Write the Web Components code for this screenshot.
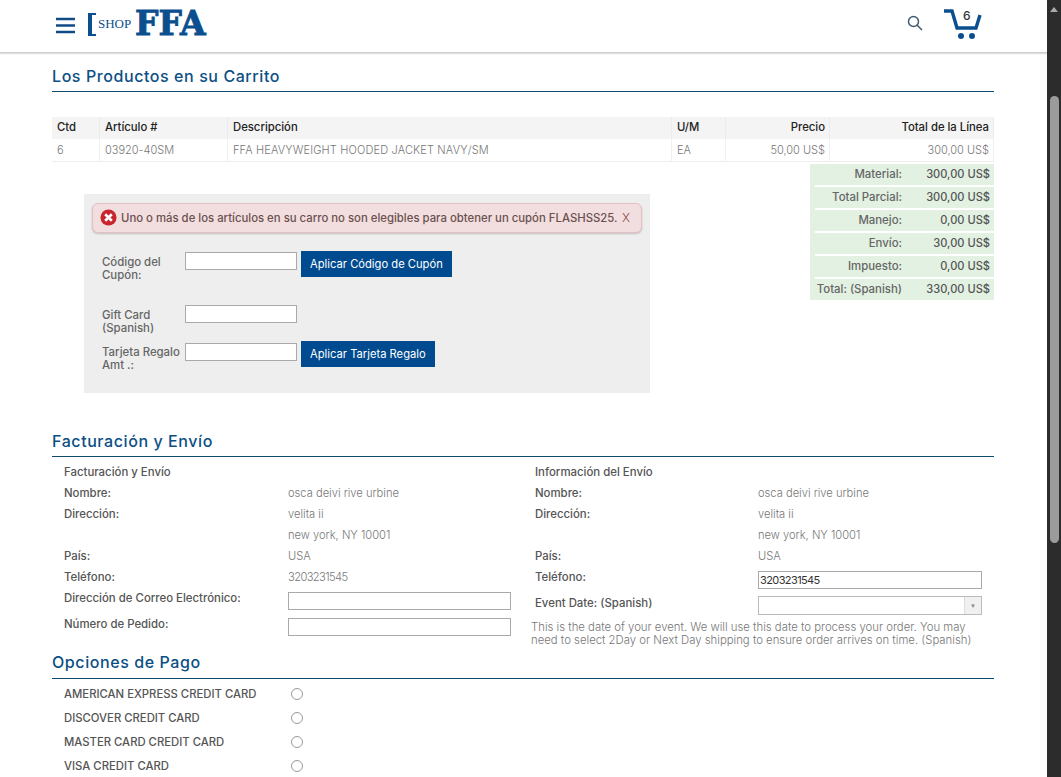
<!DOCTYPE html>
<html lang="es"><head><meta charset="utf-8"><title>Carrito</title>
<style>
html,body{margin:0;padding:0;height:777px;overflow:hidden;background:#fff}
body{display:flex;font:11.4px Inter,"Liberation Sans",sans-serif;color:#555;--blue:#004b8d;--line:#0c4a6e}
</style></head><body>
<page-main>
<site-header></site-header>
<page-content>
<section-heading style="margin-top:14px">Los Productos en su Carrito</section-heading>
<cart-table></cart-table>
<div style="display:flex;align-items:flex-start">
<coupon-box></coupon-box>
<order-totals></order-totals>
</div>
<section-heading style="margin-top:39px">Facturación y Envío</section-heading>
<address-panel></address-panel>
<section-heading style="margin-top:2px;--lh:16px">Opciones de Pago</section-heading>
<payment-options></payment-options>
</page-content>
</page-main>
<fake-scrollbar></fake-scrollbar>
<script>
function def(name,html){customElements.define(name,class extends HTMLElement{constructor(){super();this.attachShadow({mode:"open"}).innerHTML=html}})}
def('page-main','<style>:host{display:block;flex:1;min-width:0;height:777px;overflow:hidden}</style><slot></slot>');
def('page-content','<style>:host{display:block;padding:0 53px 0 52px}</style><slot></slot>');
def('site-header',`<style>
:host{display:flex;align-items:center;height:52px;border-bottom:1px solid #cfcfcf;box-shadow:0 1px 1px #ddd;background:#fff}
.burger{margin:-2px 0 0 56px;display:block;flex:none}
.logo{display:flex;align-items:center;margin-left:13px;color:#0b4f8f}
.br{height:23px;border-left:4px solid #0b4f8f;border-top:2px solid #0b4f8f;border-bottom:2px solid #0b4f8f;box-sizing:border-box;width:8px;margin-top:-4px}
.shop{font:13px "Liberation Serif",serif;margin-left:2px;margin-top:-5px;width:38px}
.ffa{font:bold 33px/30px "DejaVu Serif",serif;-webkit-text-stroke:.9px #0b4f8f;margin-top:-4px;margin-left:-1px}
.sp{flex:1}
.search{display:block;margin-right:20px;margin-top:-6px}
.cart{position:relative;width:42px;height:32px;margin-right:62px;margin-top:-4px}
.cart span{position:absolute;left:20px;top:0;font:500 12px Inter,sans-serif;color:#333}
</style>
<svg class="burger" width="19" height="17" viewBox="0 0 19 17"><path d="M0 2h19M0 8.500h19M0 15h19" stroke="#124a85" stroke-width="2.600"/></svg>
<div class="logo"><div class="br"></div><div class="shop">SHOP</div><div class="ffa">FFA</div></div>
<div class="sp"></div>
<svg class="search" width="16" height="16" viewBox="0 0 16 16" fill="none" stroke="#3f5a72" stroke-width="1.500"><circle cx="6.500" cy="6.500" r="5"/><path d="M10 10l5 5"/></svg>
<div class="cart"><svg width="42" height="32" viewBox="0 0 42 32"><path d="M1 3h8l5 17h19l4-13" fill="none" stroke="#0b4f8f" stroke-width="3.400"/><circle cx="18" cy="28" r="3" fill="#0b4f8f"/><circle cx="29" cy="28" r="3" fill="#0b4f8f"/></svg><span>6</span></div>`);
def('section-heading',`<style>:host{display:block;height:24px;border-bottom:1px solid var(--line);font:500 16px/var(--lh,18px) Inter,sans-serif;color:#0b4f84;letter-spacing:.58px}</style><slot></slot>`);
def('cart-table',`<style>
:host{display:grid;grid-template-columns:48px 128px 444px 54px 104px 164px;margin-top:25px;font-size:11px;height:45px;grid-template-rows:22px 23px}
div{padding:0 4px 0 5px;line-height:21px;white-space:nowrap;border-right:1px solid #f0f0f0;box-sizing:border-box}
.h{background:#f4f4f4;color:#222;font-weight:500;font-size:11.300px;border-right-color:#ececec}
.b{color:#777;font-weight:300;border-bottom:1px solid #eee;line-height:22px}
.r{text-align:right}
.d{letter-spacing:.14px}
</style>
<div class="h">Ctd</div><div class="h">Artículo #</div><div class="h">Descripción</div><div class="h">U/M</div><div class="h r">Precio</div><div class="h r">Total de la Línea</div>
<div class="b">6</div><div class="b">03920-40SM</div><div class="b d">FFA HEAVYWEIGHT HOODED JACKET NAVY/SM</div><div class="b">EA</div><div class="b r">50,00 US$</div><div class="b r">300,00 US$</div>`);
def('order-totals',`<style>
:host{display:grid;margin-left:auto;width:184px;grid-auto-rows:21px;row-gap:2px;margin-top:2px;font-weight:500;font-size:11.400px;color:#666;border-left:5px solid #e2f1e2;box-sizing:border-box;grid-template-columns:87px 92px}
div{background:#e2f1e2;text-align:right;line-height:21px;white-space:nowrap}
.v{padding-right:4px;color:#555;font-size:11.100px}
</style>
<div>Material:</div><div class="v">300,00 US$</div>
<div>Total Parcial:</div><div class="v">300,00 US$</div>
<div>Manejo:</div><div class="v">0,00 US$</div>
<div>Envío:</div><div class="v">30,00 US$</div>
<div>Impuesto:</div><div class="v">0,00 US$</div>
<div>Total: (Spanish)</div><div class="v">330,00 US$</div>`);
def('alert-box',`<style>
:host{display:flex;align-items:center;gap:4px;height:30px;box-sizing:border-box;margin:0 8px;padding:0 11px 1px 7px;background:#f2dede;border:1px solid #e6c0c4;border-radius:6px;box-shadow:0 1px 2px #0003;color:#6b5050;font-size:11.350px;white-space:nowrap}
.x{margin-left:auto;color:#8a4a4a;font-size:12px;font-weight:300}
svg{flex:none}
</style>
<svg width="17" height="17" viewBox="0 0 18 18"><circle cx="9" cy="9" r="8.500" fill="#c9252c"/><path d="M5.500 5.500l7 7M12.500 5.500l-7 7" stroke="#fff" stroke-width="2.800"/></svg>
<span><slot></slot></span><span class="x">X</span>`);
def('coupon-box',`<style>
:host{display:block;box-sizing:border-box;margin:32px 0 0 32px;width:566px;height:199px;background:#eee;padding-top:9px;font-weight:500;color:#666}
.row{display:flex;align-items:flex-start;padding-left:18px}
label{width:83px;line-height:13px;flex:none}
input{display:block;box-sizing:border-box;width:112px;height:18px;border:1px solid #aaa;background:#fff;margin:0;padding:0}
button{display:block;margin:-1px 0 0 4px;height:26px;padding:0 9px;background:#004b8f;color:#fff;border:0;font:400 11.200px Inter,sans-serif}
</style>
<alert-box>Uno o más de los artículos en su carro no son elegibles para obtener un cupón FLASHSS25.</alert-box>
<div class="row" style="margin-top:19px;height:53px"><label style="padding-top:4px">Código del Cupón:</label><input aria-label="c"><button>Aplicar Código de Cupón</button></div>
<div class="row" style="height:38px"><label style="padding-top:4px">Gift Card (Spanish)</label><input aria-label="g"></div>
<div class="row"><label style="padding-top:3px">Tarjeta Regalo Amt .:</label><input aria-label="t"><button style="margin-top:-2px">Aplicar Tarjeta Regalo</button></div>`);
def('address-panel',`<style>
:host{display:grid;grid-template-columns:471px 1fr;height:195px;box-sizing:border-box;padding-left:12px}
.col{display:grid;grid-template-columns:224px 1fr;grid-auto-rows:21px;align-content:start;padding-top:5px}
.col.r{grid-template-columns:223px 1fr}
.l{font-weight:500;color:#555;line-height:21px}
.v{color:#777;font-weight:300;line-height:21px;font-size:11.150px}
.n{letter-spacing:-.6px}
input{box-sizing:border-box;height:18px;border:1px solid #aaa;padding:0 1px;margin:0;width:223px;font:400 11px Inter,sans-serif;letter-spacing:-.6px;color:#333;display:block;background:#fff}
.h{grid-column:1/3}
.note{font-weight:300;color:#777;line-height:13px;font-size:11.350px;margin:0 0 0 -4px;grid-column:1/3;grid-row:span 2;width:450px}
.dd{display:flex;width:224px;height:19px;box-sizing:border-box;border:1px solid #bbb;background:#fff;justify-content:flex-end}
.dd i{width:16px;background:#f0f0f0;border-left:1px solid #ddd;display:flex;align-items:center;justify-content:center;font:normal 6px sans-serif;color:#888}
</style>
<div class="col">
<div class="l h">Facturación y Envío</div>
<div class="l">Nombre:</div><div class="v">osca deivi rive urbine</div>
<div class="l">Dirección:</div><div class="v">velita ii</div>
<div class="l"></div><div class="v">new york, NY 10001</div>
<div class="l">País:</div><div class="v">USA</div>
<div class="l">Teléfono:</div><div class="v n">3203231545</div>
<div class="l">Dirección de Correo Electrónico:</div><div><input aria-label="email" style="margin-top:4px"></div>
<div class="l" style="margin-top:5px">Número de Pedido:</div><div><input aria-label="pedido" style="margin-top:9px"></div>
</div>
<div class="col r">
<div class="l h">Información del Envío</div>
<div class="l">Nombre:</div><div class="v">osca deivi rive urbine</div>
<div class="l">Dirección:</div><div class="v">velita ii</div>
<div class="l"></div><div class="v">new york, NY 10001</div>
<div class="l">País:</div><div class="v">USA</div>
<div class="l">Teléfono:</div><div><input aria-label="tel" value="3203231545" style="margin-top:4px;width:224px"></div>
<div class="l" style="margin-top:5px">Event Date: (Spanish)</div><div class="dd" style="margin-top:8px"><i>▼</i></div>
<div class="note" style="margin-top:12px">This is the date of your event. We will use this date to process your order. You may need to select 2Day or Next Day shipping to ensure order arrives on time. (Spanish)</div>
</div>`);
def('payment-options',`<style>
:host{display:grid;grid-template-columns:227px 1fr;grid-auto-rows:24px;padding:3px 0 0 12px;font-weight:500;color:#555;font-size:11.300px}
div{line-height:24px}
.c{display:flex;align-items:center}
i{display:block;width:10px;height:10px;border:1px solid #999;border-radius:50%;background:#fff}
</style>
<div>AMERICAN EXPRESS CREDIT CARD</div><div class="c"><i></i></div>
<div>DISCOVER CREDIT CARD</div><div class="c"><i></i></div>
<div>MASTER CARD CREDIT CARD</div><div class="c"><i></i></div>
<div>VISA CREDIT CARD</div><div class="c"><i></i></div>`);
def('fake-scrollbar',`<style>
:host{display:flex;flex-direction:column;align-items:center;flex:none;width:14px;height:777px;background:#2c2c2c}
.up{width:0;height:0;border:4px solid transparent;border-bottom:5px solid #aaa;border-top:0;margin-top:7px}
.t{width:9px;height:447px;background:#9b9b9b;border-radius:5px;margin-top:84px}
</style><div class="up"></div><div class="t"></div>`);
</script>
</body></html>
